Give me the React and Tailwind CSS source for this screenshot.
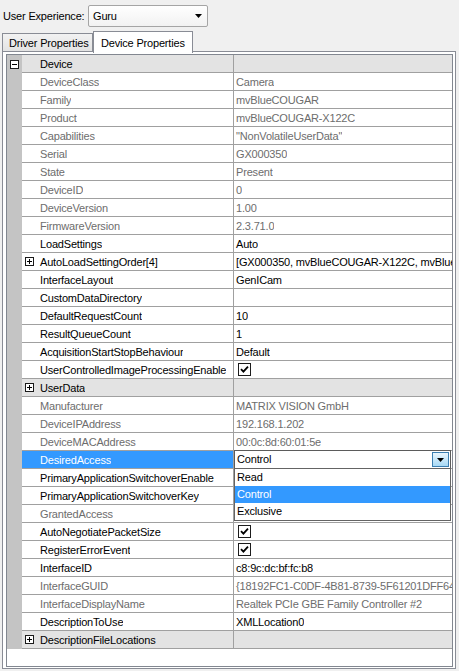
import React from "react";

// Property grid rows, top to bottom
const ROWS = [
  { name: "Device", cat: true, box: "minus", strip: true },
  { name: "DeviceClass", value: "Camera", ro: true },
  { name: "Family", value: "mvBlueCOUGAR", ro: true },
  { name: "Product", value: "mvBlueCOUGAR-X122C", ro: true },
  { name: "Capabilities", value: '"NonVolatileUserData"', ro: true },
  { name: "Serial", value: "GX000350", ro: true },
  { name: "State", value: "Present", ro: true },
  { name: "DeviceID", value: "0", ro: true },
  { name: "DeviceVersion", value: "1.00", ro: true },
  { name: "FirmwareVersion", value: "2.3.71.0", ro: true },
  { name: "LoadSettings", value: "Auto" },
  { name: "AutoLoadSettingOrder[4]", value: "[GX000350, mvBlueCOUGAR-X122C, mvBlueCOUGAR]", box: "plus" },
  { name: "InterfaceLayout", value: "GenICam" },
  { name: "CustomDataDirectory", value: "" },
  { name: "DefaultRequestCount", value: "10" },
  { name: "ResultQueueCount", value: "1" },
  { name: "AcquisitionStartStopBehaviour", value: "Default" },
  { name: "UserControlledImageProcessingEnable", check: true },
  { name: "UserData", cat: true, box: "plus" },
  { name: "Manufacturer", value: "MATRIX VISION GmbH", ro: true },
  { name: "DeviceIPAddress", value: "192.168.1.202", ro: true },
  { name: "DeviceMACAddress", value: "00:0c:8d:60:01:5e", ro: true },
  { name: "DesiredAccess", selected: true, combo: "Control" },
  { name: "PrimaryApplicationSwitchoverEnable", value: "" },
  { name: "PrimaryApplicationSwitchoverKey", value: "" },
  { name: "GrantedAccess", value: "", ro: true },
  { name: "AutoNegotiatePacketSize", check: true },
  { name: "RegisterErrorEvent", check: true },
  { name: "InterfaceID", value: "c8:9c:dc:bf:fc:b8" },
  { name: "InterfaceGUID", value: "{18192FC1-C0DF-4B81-8739-5F61201DFF64}", ro: true },
  { name: "InterfaceDisplayName", value: "Realtek PCIe GBE Family Controller #2", ro: true },
  { name: "DescriptionToUse", value: "XMLLocation0" },
  { name: "DescriptionFileLocations", cat: true, box: "plus" },
];

function ExpandBox({ kind }) {
  return (
    <svg width="9" height="9" viewBox="0 0 9 9" className="shrink-0">
      <rect x="0.5" y="0.5" width="8" height="8" fill="#fff" stroke="#1a1a1a" />
      <line x1="2" y1="4.5" x2="7" y2="4.5" stroke="#000" />
      {kind === "plus" && <line x1="4.5" y1="2" x2="4.5" y2="7" stroke="#000" />}
    </svg>
  );
}

function CheckBox() {
  return (
    <div className="w-[13px] h-[13px] border border-[#1c1c1c] bg-white flex items-center justify-center">
      <svg width="9" height="9" viewBox="0 0 9 9">
        <path d="M1 4.2 L3.4 6.6 L8 1.6" fill="none" stroke="#000" strokeWidth="1.8" />
      </svg>
    </div>
  );
}

function ComboOpen({ value }) {
  return (
    <>
      <div className="absolute left-0 -top-px w-[217px] h-[19px] border border-[#5b5b5b] bg-white flex items-center pl-[2px]">
        <span className="text-black">{value}</span>
        <div className="ml-auto mr-px w-[17px] h-[15px] border border-[#3c7fb1] bg-gradient-to-b from-[#eaf6fd] to-[#a7d9f5] flex items-center justify-center">
          <svg width="7" height="4" viewBox="0 0 7 4">
            <path d="M0 0 H7 L3.5 4 Z" fill="#000" />
          </svg>
        </div>
      </div>
      <div className="absolute left-0 top-[17px] z-20 w-[217px] h-[53px] border border-[#646464] bg-white flex flex-col">
        <div className="h-[17px] flex items-center pl-[2px] text-black">Read</div>
        <div className="h-[17px] flex items-center pl-[2px] bg-[#3399ff] text-white">Control</div>
        <div className="h-[17px] flex items-center pl-[2px] text-black">Exclusive</div>
      </div>
    </>
  );
}

function GridRow({ row }) {
  const txt = row.ro ? "text-[#6d6d6d]" : "text-black";
  const catBg = row.cat ? "bg-[#e3e3e3]" : "bg-white";
  return (
    <div className="flex h-[18px]">
      <div className="w-[15px] bg-[#c4c4c4] flex items-center justify-center">
        {row.strip && <ExpandBox kind={row.box} />}
      </div>
      <div
        className={`w-[212px] border-b border-r border-[#a0a0a0] flex items-center relative ${
          row.selected ? "bg-[#3399ff] text-white" : `${catBg} ${txt}`
        }`}
      >
        {!row.strip && row.box && (
          <div className="absolute left-[3px] top-[4px]">
            <ExpandBox kind={row.box} />
          </div>
        )}
        <span className="pl-[18px] pt-px whitespace-nowrap overflow-hidden">{row.name}</span>
      </div>
      <div className={`w-[218px] border-b border-[#a0a0a0] flex items-center relative ${catBg} ${txt}`}>
        {row.check ? (
          <div className="pl-[4px]">
            <CheckBox />
          </div>
        ) : row.combo ? (
          <ComboOpen value={row.combo} />
        ) : (
          <span className="pl-[2px] pt-px whitespace-nowrap overflow-hidden">{row.value}</span>
        )}
      </div>
    </div>
  );
}

export default function App() {
  return (
    <div
      className="w-[459px] h-[671px] bg-[#f0f0f0] text-[11px] tracking-[-0.18px] text-black overflow-hidden"
      style={{ fontFamily: '"Liberation Sans", Arial, sans-serif' }}
    >
      {/* top bar */}
      <div className="flex items-center pt-[5px] pl-[3px] h-[27px]">
        <span className="w-[85px]">User Experience:</span>
        <div className="w-[120px] h-[22px] border border-[#a5a5a5] rounded-[2px] bg-gradient-to-b from-[#ffffff] to-[#f2f2f2] flex items-center pl-[4px] pr-[5px]">
          <span>Guru</span>
          <svg width="7" height="4" viewBox="0 0 7 4" className="ml-auto">
            <path d="M0 0 H7 L3.5 4 Z" fill="#000" />
          </svg>
        </div>
      </div>

      {/* tabs */}
      <div className="flex items-end h-[20px] mt-[4px] pl-[2px]">
        <div className="w-[91px] h-[18px] border-l border-t border-r border-[#898c95] bg-gradient-to-b from-[#f2f2f2] to-[#e3e3e3] flex items-center pl-[6px] pt-px">
          Driver Properties
        </div>
        <div className="relative z-10 -mb-[2px] w-[100px] h-[22px] border-l border-t border-r border-[#898c95] bg-white flex items-start pt-[3px] pl-[7px]">
          Device Properties
        </div>
      </div>

      {/* tab page */}
      <div className="ml-[2px] w-[454px] h-[618px] border border-[#898c95] bg-white pt-[2px] pl-[3px] pb-px">
        <div className="w-[447px] h-[613px] border border-[#828790] bg-white">
          {ROWS.map((r) => (
            <GridRow key={r.name} row={r} />
          ))}
        </div>
      </div>
    </div>
  );
}
